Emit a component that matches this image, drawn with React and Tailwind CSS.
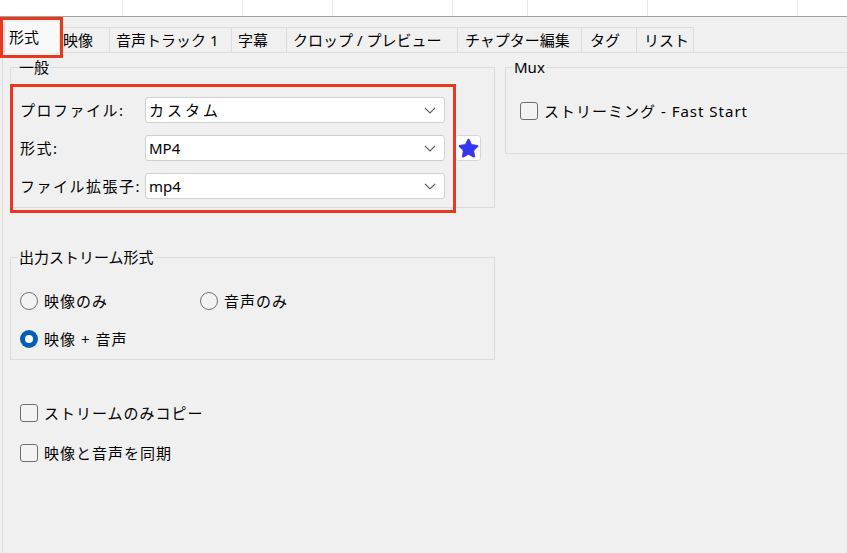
import { Star } from 'lucide-react';

const topCols = [123, 120, 90, 120, 75, 120, 150];

const tabs = [
  { label: '形式', w: 56, pl: 4, active: true },
  { label: '映像', w: 50, pl: 3 },
  { label: '音声トラック 1', w: 122, pl: 6 },
  { label: '字幕', w: 55, pl: 6 },
  { label: 'クロップ / プレビュー', w: 171, pl: 6 },
  { label: 'チャプター編集', w: 124, pl: 7 },
  { label: 'タグ', w: 55, pl: 8 },
  { label: 'リスト', w: 57, pl: 7 },
];

const fields = [
  { label: 'プロファイル:', value: 'カスタム', star: false },
  { label: '形式:', value: 'MP4', star: true },
  { label: 'ファイル拡張子:', value: 'mp4', star: false },
];

const Chevron = () => (
  <svg width="12" height="7" viewBox="0 0 12 7" fill="none">
    <path d="M1 1l5 5 5-5" stroke="#606060" strokeWidth="1.1" />
  </svg>
);

const Checkbox = ({ label }) => (
  <div className="flex items-center h-[20px]">
    <div className="w-[18px] h-[18px] rounded-[3px] border border-[#6e6e6e] bg-[#f3f3f3]" />
    <span className="ml-[6px] tracking-[1px]">{label}</span>
  </div>
);

const Radio = ({ label, checked }) => (
  <div className="flex items-center h-[20px]">
    {checked ? (
      <div className="w-[18px] h-[18px] rounded-full bg-[#005fb8] flex items-center justify-center">
        <div className="w-[8px] h-[8px] rounded-full bg-white" />
      </div>
    ) : (
      <div className="w-[18px] h-[18px] rounded-full border border-[#707070] bg-[#f3f3f3]" />
    )}
    <span className="ml-[6px] tracking-[1px]">{label}</span>
  </div>
);

const GroupBox = ({ title, className, children }) => (
  <div className={`relative border border-[#dcdcdc] ${className}`}>
    <span className="absolute -top-[11px] left-[7px] bg-[#f0f0f0] px-[1px] leading-[20px]">{title}</span>
    {children}
  </div>
);

export default function App() {
  return (
    <div
      className="relative w-[847px] h-[553px] overflow-hidden bg-[#f0f0f0] text-black text-[15px]"
      style={{ fontFamily: '"Noto Sans", "Noto Sans CJK JP", sans-serif' }}
    >
      {/* top strip */}
      <div className="flex h-[17px] bg-white border-b border-[#a0a0a0]">
        {topCols.map((w, i) => (
          <div key={i} className="h-full border-r border-[#e6e6e6]" style={{ width: w }} />
        ))}
        <div className="flex-1" />
      </div>

      {/* tabs */}
      <div className="flex items-end h-[36px] border-b border-[#dcdcdc] pl-[4px]">
        {tabs.map((t) => (
          <div
            key={t.label}
            className={`flex items-center shrink-0 border-r border-[#dcdcdc] whitespace-nowrap leading-none ${
              t.active ? 'h-[31px] bg-[#f9f9f9] border-l -mb-px' : 'h-[25px] bg-[#f0f0f0] border-t'
            }`}
            style={{ width: t.w, paddingLeft: t.pl }}
          >
            {t.label}
          </div>
        ))}
      </div>

      {/* pane */}
      <div className="flex h-full border-l border-[#dadada] ml-[2px]">
        <div className="ml-[7px] w-[485px] shrink-0">
          <GroupBox title="一般" className="mt-[14px] pt-[29px] pb-[8px]">
            <div className="flex flex-col gap-[12px]">
              {fields.map((f) => (
                <div key={f.label} className="flex items-center h-[26px]">
                  <div className="w-[134px] pl-[9px] tracking-[1.5px] whitespace-nowrap">{f.label}</div>
                  <div className="w-[300px] h-[26px] bg-white border border-[#d0d0d0] rounded-[3px] flex items-center justify-between pl-[3px] pr-[8px]">
                    <span className={f.value === 'カスタム' ? 'tracking-[3px]' : ''}>{f.value}</span>
                    <Chevron />
                  </div>
                  {f.star && (
                    <div className="ml-[10px] w-[26px] h-[26px] bg-[#fbfbfb] border border-[#d6d6d6] rounded-[3px] flex items-center justify-center">
                      <Star size={23} fill="#3535f0" stroke="#3535f0" strokeWidth={1} />
                    </div>
                  )}
                </div>
              ))}
            </div>
          </GroupBox>

          <GroupBox title="出力ストリーム形式" className="mt-[49px] pt-[33px] pb-[10px] pl-[9px]">
            <div className="flex flex-col gap-[18px]">
              <div className="flex">
                <div className="w-[180px]">
                  <Radio label="映像のみ" />
                </div>
                <Radio label="音声のみ" />
              </div>
              <Radio label="映像 + 音声" checked />
            </div>
          </GroupBox>

          <div className="mt-[43px] pl-[10px] flex flex-col gap-[20px]">
            <Checkbox label="ストリームのみコピー" />
            <Checkbox label="映像と音声を同期" />
          </div>
        </div>

        <div className="ml-[10px] flex-1">
          <GroupBox title="Mux" className="mt-[14px] h-[87px] border-r-0 pt-[33px] pl-[14px]">
            <Checkbox label="ストリーミング - Fast Start" />
          </GroupBox>
        </div>
      </div>

      {/* annotation boxes */}
      <div className="absolute left-0 top-[17px] w-[63px] h-[41px] border-[3px] border-[#e8381e]" />
      <div className="absolute left-[10px] top-[84px] w-[446px] h-[129px] border-[3px] border-[#e8381e]" />
    </div>
  );
}
